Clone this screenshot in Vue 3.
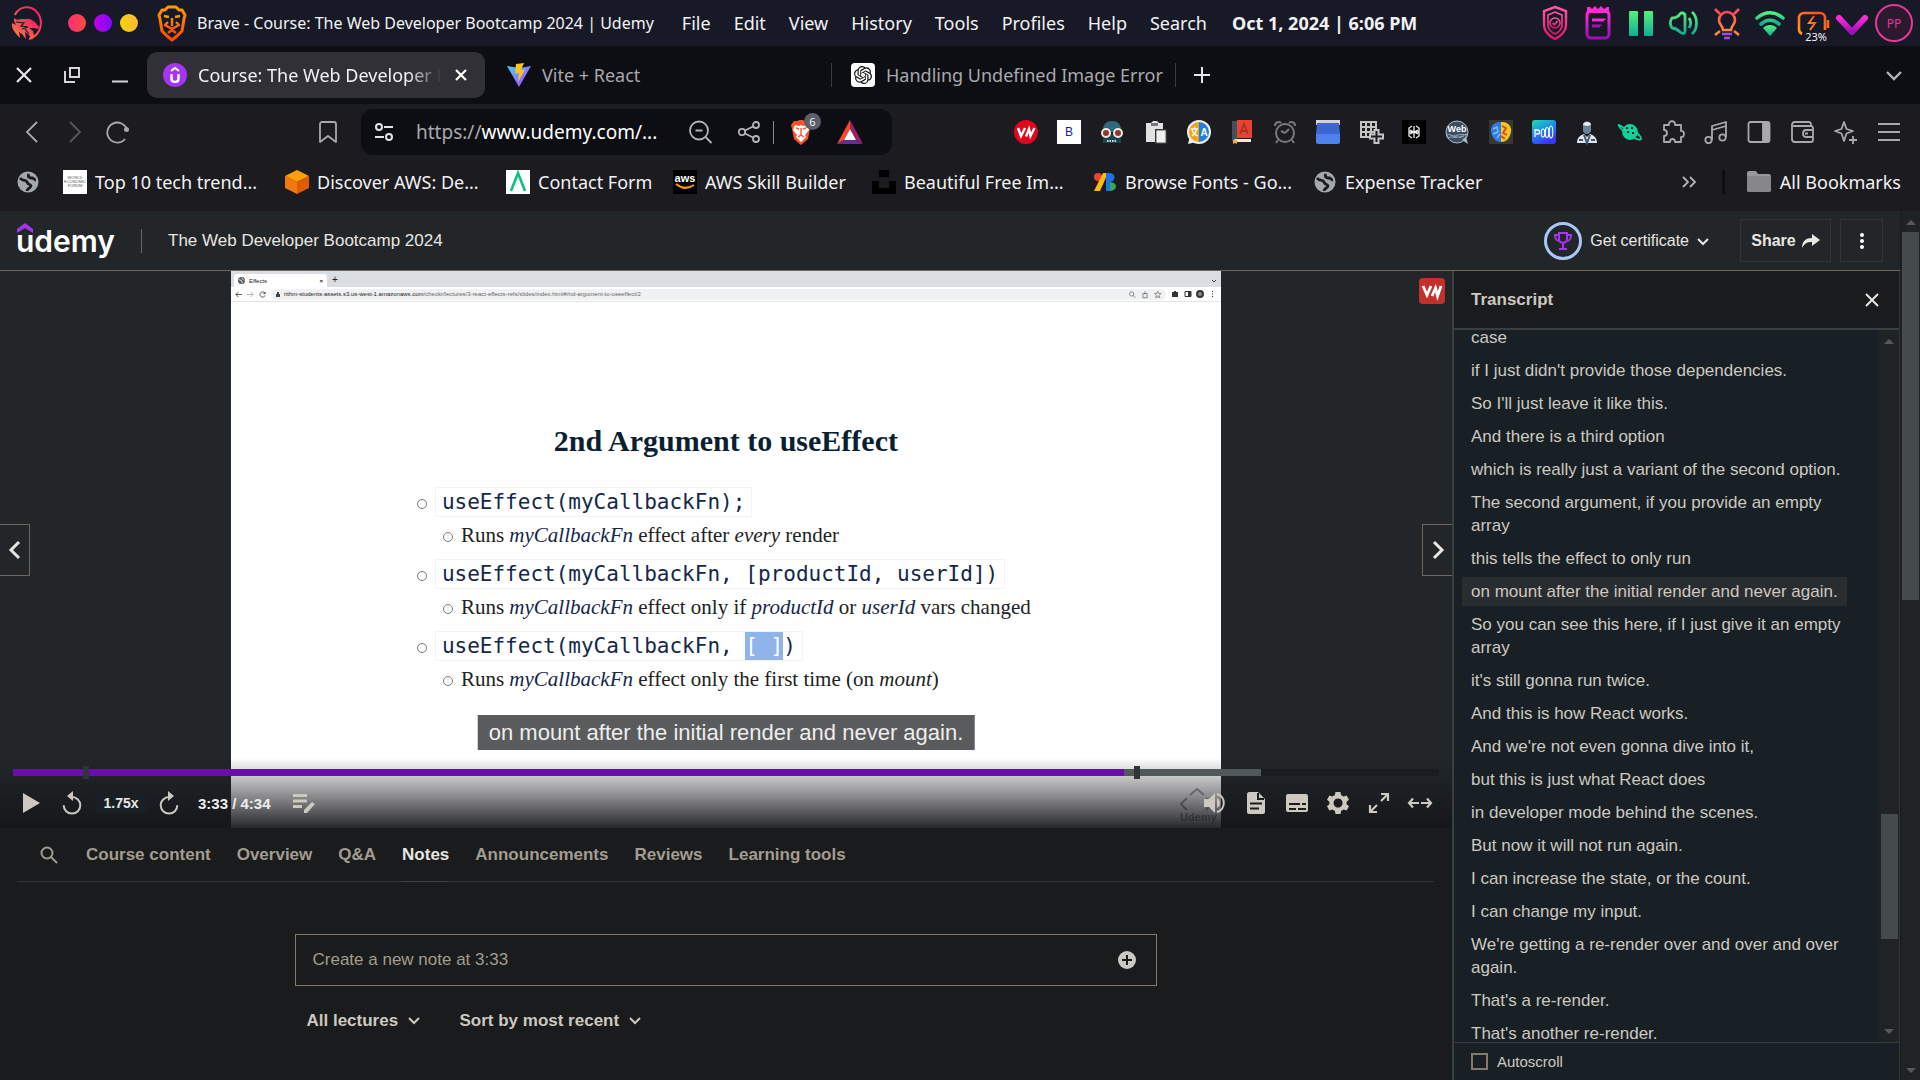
<script setup>
const menus = ['File', 'Edit', 'View', 'History', 'Tools', 'Profiles', 'Help', 'Search']

const lectureTabs = ['Course content', 'Overview', 'Q&A', 'Notes', 'Announcements', 'Reviews', 'Learning tools']
const activeTab = 'Notes'

const cues = [
  'case',
  "if I just didn't provide those dependencies.",
  "So I'll just leave it like this.",
  'And there is a third option',
  'which is really just a variant of the second option.',
  'The second argument, if you provide an empty array',
  'this tells the effect to only run',
  'on mount after the initial render and never again.',
  'So you can see this here, if I just give it an empty array',
  "it's still gonna run twice.",
  'And this is how React works.',
  "And we're not even gonna dive into it,",
  'but this is just what React does',
  'in developer mode behind the scenes.',
  'But now it will not run again.',
  'I can increase the state, or the count.',
  'I can change my input.',
  "We're getting a re-render over and over and over again.",
  "That's a re-render.",
  "That's another re-render."
]
const currentCue = 7

const played = 77.9
const buffered = 87.5
const markers = [5.1, 78.8]
</script>

<template>
  <div class="desktop">
    <!-- Desktop menu bar -->
    <header class="menubar">
      <svg class="dragon" viewBox="0 0 32 38" width="32" height="38">
        <defs>
          <linearGradient id="gDragon" x1="0" y1="1" x2="1" y2="0"><stop offset="0" stop-color="#ff8a3c" /><stop offset="1" stop-color="#ff0f6b" /></linearGradient>
          <linearGradient id="gPink" x1="0" y1="0" x2="0" y2="1"><stop offset="0" stop-color="#ff5aa8" /><stop offset="1" stop-color="#e01668" /></linearGradient>
          <linearGradient id="gMag" x1="0" y1="0" x2="0" y2="1"><stop offset="0" stop-color="#ff2bd6" /><stop offset="1" stop-color="#9c0fb4" /></linearGradient>
          <linearGradient id="gGreen" x1="0" y1="0" x2="0" y2="1"><stop offset="0" stop-color="#55f07c" /><stop offset="1" stop-color="#0fae96" /></linearGradient>
          <linearGradient id="gOrange" x1="0" y1="0" x2="0" y2="1"><stop offset="0" stop-color="#ff9a00" /><stop offset="1" stop-color="#ff4a00" /></linearGradient>
          <linearGradient id="gBulb" x1="0" y1="0" x2="0" y2="1"><stop offset="0" stop-color="#ff4a5e" /><stop offset="1" stop-color="#ff8a3c" /></linearGradient>
          <linearGradient id="gBat" x1="1" y1="0" x2="0" y2="1"><stop offset="0" stop-color="#ff4a1e" /><stop offset="1" stop-color="#ff9a1e" /></linearGradient>
        </defs>
        <path d="M4 11C8 2 19 1 25 7c7 7 6 18 0 24-2 2-4 3-7 4" fill="none" stroke="url(#gDragon)" stroke-width="2" />
        <path d="M3 14c3 3 5 1 9 1l7 0 5 3 4 5-1 2-4-1-5 0 4 3 1 4-2 5-3-5-4-3 1 7-4-5-3-2 1 6C4 29 0 24 1 19l4 2-2-4z" fill="url(#gDragon)" />
        <path d="M5 18l8 1-3 3 7 1-6 2M14 25l4 5" stroke="#171926" stroke-width="1.200" fill="none" />
      </svg>
      <div class="lights"><i class="red"></i><i class="violet"></i><i class="yellow"></i></div>
      <svg class="lion" viewBox="0 0 30 36" width="30" height="36" fill="none" stroke="url(#gOrange)" stroke-width="3" stroke-linejoin="round">
        <path d="M8 5l3-3h8l3 3 3 0 3 5-1 4-2 12-5 5-5 4-5-4-5-5L3 14 2 10l3-5z" />
        <path d="M7 11l5 1M23 11l-5 1M15 13v8M11 17l-3 3 7 4 7-4-3-3M11 28l4-3 4 3" stroke-width="2.400" />
      </svg>
      <span class="window-title">Brave - Course: The Web Developer Bootcamp 2024 | Udemy</span>
      <nav class="menus"><button v-for="m in menus" :key="m">{{ m }}</button></nav>
      <time class="clock">Oct 1, 2024 | 6:06 PM</time>
      <div class="tray">
        <svg viewBox="0 0 32 38" width="32" height="38" fill="none" stroke="url(#gPink)" stroke-width="2.400"><path d="M16 3l11 4v14c0 7-5 11-11 14C10 32 5 28 5 21V7z" /><path d="M16 8l7 3v10c0 4-3 7-7 9-4-2-7-5-7-9V11z" stroke-width="1.600" /><circle cx="16" cy="19" r="5" stroke-width="1.600" /><path d="M13.500 19l2 2 3-4" stroke-width="1.800" /></svg>
        <svg viewBox="0 0 32 38" width="32" height="38" fill="none" stroke="url(#gMag)" stroke-width="3"><rect x="5" y="7" width="22" height="27" rx="4" /><path d="M5 9V3h3l2 2 3-3 3 3 3-3 3 3 3-2h2v6z" fill="#ff2bd6" stroke="none" /><path d="M10 16h12v.1M10 22h8v.1" /></svg>
        <svg viewBox="0 0 32 38" width="32" height="38" fill="url(#gGreen)"><rect x="4" y="7" width="9" height="25" rx="1" /><rect x="19" y="7" width="9" height="25" rx="1" /></svg>
        <svg viewBox="0 0 32 38" width="32" height="38" fill="none" stroke="url(#gGreen)" stroke-width="2.800" stroke-linejoin="round"><path d="M4 14c4 0 6-1 8-4 2-2 5-1 5 2v15c0 3-3 3-5 1-2-2-4-4-8-4-2-3-2-7 0-10z" /><path d="M21 14c2 3 2 7 0 10" /><path d="M24 8c6 5 6 17 0 22" /></svg>
        <svg viewBox="0 0 32 38" width="32" height="38" fill="none" stroke="url(#gBulb)" stroke-width="2.600"><path d="M12 26c0-4-4-5-4-10a8 8 0 0 1 16 0c0 5-4 6-4 10z" /><path d="M4 5l5 5M28 5l-5 5M4 31l5-4M28 31l-5-4" /><path d="M11 30h10M13 34h6" stroke="#a24be0" /></svg>
        <svg viewBox="0 0 32 38" width="32" height="38" fill="none" stroke="url(#gGreen)" stroke-width="3.600" stroke-linecap="round"><path d="M3 14c8-7 18-7 26 0M7 20c6-5 12-5 18 0" /><path d="M9 24c4-4 10-4 14 0l-7 8z" fill="url(#gGreen)" stroke="none" /></svg>
        <div class="battery">
          <svg viewBox="0 0 32 38" width="32" height="38" fill="none" stroke="url(#gBat)" stroke-width="2.600"><path d="M5 30c-2-1-3-2-3-5V14c0-3 2-5 5-5h16c3 0 5 2 5 5v12M31 16v8" /><path d="M17 12l-5 7h6l-5 7" stroke-width="2" /></svg>
          <span>23%</span>
        </div>
        <svg class="vee" viewBox="0 0 32 38" width="32" height="38" fill="none" stroke="url(#gMag)" stroke-width="6" stroke-linecap="round" stroke-linejoin="round"><path d="M3 14l13 14 13-14" /></svg>
        <span class="avatar">PP</span>
      </div>
    </header>

    <!-- Browser tab strip -->
    <div class="tabstrip">
      <div class="wincontrols">
        <button aria-label="Close window"><svg viewBox="0 0 24 24" width="24" height="24" stroke="#e6e6ea" stroke-width="2.200"><path d="M5 5l14 14M19 5L5 19" /></svg></button>
        <button aria-label="Restore window"><svg viewBox="0 0 24 24" width="24" height="24" stroke="#d6d6da" stroke-width="2" fill="none"><rect x="10" y="5" width="9" height="9" /><path d="M5 8v11h10" /></svg></button>
        <button aria-label="Minimize window"><svg viewBox="0 0 24 24" width="24" height="24" stroke="#d6d6da" stroke-width="2"><path d="M4 18.500h16" /></svg></button>
      </div>
      <div class="tab active">
        <svg viewBox="0 0 24 24" width="24" height="24"><circle cx="12" cy="12" r="12" fill="#a435f0" /><path d="M8 8l4-3 4 3" stroke="#fff" stroke-width="2" fill="none" /><path d="M8.500 11v4.500c0 4.500 7 4.500 7 0V11" stroke="#fff" stroke-width="2.400" fill="none" /></svg>
        <span class="tab-title fade">Course: The Web Developer Bootcamp</span>
        <button aria-label="Close tab"><svg viewBox="0 0 16 16" width="16" height="16" stroke="#fff" stroke-width="2.200"><path d="M3 3l10 10M13 3L3 13" /></svg></button>
      </div>
      <div class="tab second">
        <svg viewBox="0 0 24 24" width="24" height="24">
          <defs><linearGradient id="gVite" x1="0" y1="0" x2="1" y2="1"><stop offset="0" stop-color="#41d1ff" /><stop offset="1" stop-color="#bd34fe" /></linearGradient></defs>
          <path d="M0 3l12 21L24 3l-11 2z" fill="url(#gVite)" /><path d="M9 1l8-1-3 7 4-.5L11 19l1-9-4 .5z" fill="#ffc61a" />
        </svg>
        <span class="tab-title">Vite + React</span>
      </div>
      <i class="tab-sep"></i>
      <div class="tab third">
        <svg viewBox="-4 -4 32 32" width="24" height="24"><rect x="-4" y="-4" width="32" height="32" rx="5" fill="#fff" /><path fill="#111" d="M22.2819 9.8211a5.9847 5.9847 0 0 0-.5157-4.9108 6.0462 6.0462 0 0 0-6.5098-2.9A6.0651 6.0651 0 0 0 4.9807 4.1818a5.9847 5.9847 0 0 0-3.9977 2.9 6.0462 6.0462 0 0 0 .7427 7.0966 5.98 5.98 0 0 0 .511 4.9107 6.051 6.051 0 0 0 6.5146 2.9001A5.9847 5.9847 0 0 0 13.2599 24a6.0557 6.0557 0 0 0 5.7718-4.2058 5.9894 5.9894 0 0 0 3.9977-2.9001 6.0557 6.0557 0 0 0-.7475-7.0729zm-9.022 12.6081a4.4755 4.4755 0 0 1-2.8764-1.0408l.1419-.0804 4.7783-2.7582a.7948.7948 0 0 0 .3927-.6813v-6.7369l2.02 1.1686a.071.071 0 0 1 .038.052v5.5826a4.504 4.504 0 0 1-4.4945 4.4944zm-9.6607-4.1254a4.4708 4.4708 0 0 1-.5346-3.0137l.142.0852 4.783 2.7582a.7712.7712 0 0 0 .7806 0l5.8428-3.3685v2.3324a.0804.0804 0 0 1-.0332.0615L9.74 19.9502a4.4992 4.4992 0 0 1-6.1408-1.6464zM2.3408 7.8956a4.485 4.485 0 0 1 2.3655-1.9728V11.6a.7664.7664 0 0 0 .3879.6765l5.8144 3.3543-2.0201 1.1685a.0757.0757 0 0 1-.071 0l-4.8303-2.7865A4.504 4.504 0 0 1 2.3408 7.872zm16.5963 3.8558L13.1038 8.364 15.1192 7.2a.0757.0757 0 0 1 .071 0l4.8303 2.7913a4.4944 4.4944 0 0 1-.6765 8.1042v-5.6772a.79.79 0 0 0-.407-.667zm2.0107-3.0231l-.142-.0852-4.7735-2.7818a.7759.7759 0 0 0-.7854 0L9.409 9.2297V6.8974a.0662.0662 0 0 1 .0284-.0615l4.8303-2.7866a4.4992 4.4992 0 0 1 6.6802 4.66zM8.3065 12.863l-2.02-1.1638a.0804.0804 0 0 1-.038-.0567V6.0742a4.4992 4.4992 0 0 1 7.3757-3.4537l-.142.0805L8.704 5.459a.7948.7948 0 0 0-.3927.6813zm1.0976-2.3654l2.602-1.4998 2.6069 1.4998v2.9994l-2.5974 1.4997-2.6067-1.4997Z" /></svg>
        <span class="tab-title">Handling Undefined Image Error</span>
      </div>
      <i class="tab-sep"></i>
      <button class="newtab" aria-label="New tab"><svg viewBox="0 0 18 18" width="18" height="18" stroke="#e6e6ea" stroke-width="2"><path d="M9 1v16M1 9h16" /></svg></button>
      <button class="tabsearch" aria-label="Search tabs"><svg viewBox="0 0 18 18" width="18" height="18" stroke="#b4b4b8" stroke-width="2.400" fill="none"><path d="M2 6l7 7 7-7" /></svg></button>
    </div>

    <!-- Address row -->
    <div class="toolbar">
      <div class="navbtns">
        <button aria-label="Back"><svg viewBox="0 0 24 24" width="24" height="24" stroke="#a9a9ad" stroke-width="1.800" fill="none"><path d="M17 2L7 12l10 10" /></svg></button>
        <button aria-label="Forward"><svg viewBox="0 0 24 24" width="24" height="24" stroke="#57575c" stroke-width="1.800" fill="none"><path d="M7 2l10 10L7 22" /></svg></button>
        <button aria-label="Reload"><svg viewBox="0 0 24 24" width="24" height="24" stroke="#a9a9ad" stroke-width="1.800" fill="none"><path d="M21 10A10 10 0 1 0 19 19" /><circle cx="20.500" cy="9.500" r="2.500" fill="#a9a9ad" stroke="none" /></svg></button>
      </div>
      <button class="bookmark" aria-label="Bookmark"><svg viewBox="0 0 24 24" width="24" height="24" stroke="#a9a9ad" stroke-width="1.800" fill="none" stroke-linejoin="round"><path d="M4 4c0-1 1-2 2-2h12c1 0 2 1 2 2v18l-8-6-8 6z" /></svg></button>
      <div class="omnibox">
        <svg viewBox="0 0 24 24" width="24" height="24" stroke="#e3e3e6" stroke-width="2" fill="none"><circle cx="7" cy="7" r="3" /><path d="M12 7h9M3 17h9" /><circle cx="17" cy="17" r="3" /></svg>
        <span class="url"><span>https://</span>www.udemy.com/...</span>
        <svg viewBox="0 0 24 24" width="24" height="24" stroke="#b4b4b8" stroke-width="1.800" fill="none"><circle cx="11" cy="10.500" r="9" /><path d="M17.500 17l6 6M7.500 10.500h7" /></svg>
        <svg class="share" viewBox="0 0 24 24" width="24" height="24" stroke="#b4b4b8" stroke-width="1.800" fill="none"><circle cx="5" cy="12" r="3.200" /><circle cx="19" cy="5" r="3" /><circle cx="19" cy="19" r="3" /><path d="M8 10.500l8-4M8 13.500l8 4" /></svg>
        <i class="urlsep"></i>
        <div class="shields">
          <svg viewBox="0 0 22 26" width="22" height="26"><path d="M4 2h4l1-1h4l1 1h4l3 4-1 4-2 10-7 6-7-6L2 10 1 6z" fill="#fb542b" /><path d="M5 6l4 1 2-1 2 1 4-1 2 5-4 5 1 2-5 5-5-5 1-2-4-5z" fill="#fff" /><path d="M6 9l3 1M16 9l-3 1M11 9v7M8 18l3-2 3 2" stroke="#fb542b" stroke-width="1.400" fill="none" /></svg>
          <span>6</span>
        </div>
        <svg class="bat" viewBox="0 0 26 24" width="26" height="24"><path d="M13 0L0 24l7-4 6-11z" fill="#ff4724" /><path d="M13 0v9l6 11 7 4z" fill="#9e1f63" /><path d="M0 24h26l-7-4H7z" fill="#662d91" /><path d="M13 9l6 11H7z" fill="#fff" /></svg>
      </div>
      <div class="extensions">
        <svg viewBox="0 0 24 24"><circle cx="12" cy="12" r="12" fill="#e1051e" /><path d="M4 8l3 8 4-8M12 16.500l3-7.500 1.500 7 4-8" stroke="#fff" stroke-width="2.400" fill="none" /></svg>
        <svg viewBox="0 0 24 24"><rect width="24" height="24" fill="#fff" /><text x="12" y="16" text-anchor="middle" font-family="Liberation Sans, sans-serif" font-size="12" fill="#2018b0">B</text></svg>
        <svg viewBox="0 0 24 24"><path d="M3 12C2 4 7 1 12 1s10 3 9 11z" fill="#2b6b7c" /><path d="M3 14h18v9H3z" fill="#1c4552" /><path d="M7 21h10" stroke="#cde" stroke-width="2" stroke-dasharray="1.500 1" /><circle cx="6" cy="13" r="4" fill="#8c3a30" stroke="#f2e6dc" stroke-width="2" /><circle cx="18" cy="13" r="4" fill="#8c3a30" stroke="#f2e6dc" stroke-width="2" /></svg>
        <svg viewBox="0 0 24 24"><path d="M3 3h5l2-2h4l2 2h4v6h-8v13H3z" fill="#e1e1e1" /><path d="M8 3h7v3H8z" fill="#777" /><rect x="13" y="10" width="10" height="13" fill="#f0f0f0" stroke="#555" /></svg>
        <svg viewBox="0 0 24 24"><circle cx="12" cy="12" r="12" fill="#eee" /><path d="M1 24l2-8 6 6z" fill="#eee" /><path d="M12 2v20A10 10 0 0 1 12 2z" fill="#f2a21c" /><path d="M12 2a10 10 0 0 1 0 20z" fill="#1c80dc" /><text x="17" y="16" text-anchor="middle" font-family="Liberation Sans, sans-serif" font-weight="bold" font-size="10" fill="#fff">A</text><path d="M4 9h7M7.500 7v2M5 16c3-2 4-4 5-7M5 10c1 3 3 5 6 6" stroke="#fff" stroke-width="1.300" fill="none" /></svg>
        <svg viewBox="0 0 24 24"><rect x="2" y="1" width="5" height="20" fill="#45515a" /><rect x="7" width="15" height="18" fill="#e74335" /><path d="M4 19h17v3H7z" fill="#f3e9dc" /><path d="M3 20h4v4l-2-1-2 1z" fill="#f0b429" /><path d="M10 14l4-10 4 10M12 11h5" stroke="#b02d22" stroke-width="1.800" fill="none" /></svg>
        <svg viewBox="0 0 24 24" fill="none" stroke="#77797c" stroke-width="2"><circle cx="12" cy="13" r="9" /><path d="M2 6c0-4 4-5 6-3M22 6c0-4-4-5-6-3M5 20l-2 3M19 20l2 3M12 13l4-4M12 13l-4-2" /></svg>
        <svg viewBox="0 0 24 24"><path d="M0 0h24v5H0z" fill="#d4d4d4" /><path d="M1 3h22l1 11H0z" fill="#3d66d0" /><path d="M0 14h24v8c0 1-1 2-2 2H2c-1 0-2-1-2-2z" fill="#4b83ee" /></svg>
        <svg viewBox="0 0 24 24" fill="none" stroke="#c4c4c4" stroke-width="2"><path d="M2 2h15v15H2zM7 2v15M12 2v15M2 7h15M2 12h15" /><path d="M15 10h7v4h-7zM10 14h14v6H10zM14 20h6v4h-6z" fill="#1c1b20" stroke="none" /><path d="M15.500 10h4v4.500H24v4h-4.500V23h-4v-4.500H11v-4h4.500z" /></svg>
        <svg viewBox="0 0 24 24"><rect width="24" height="24" fill="#000" /><path d="M12 6v12M10 6L7 8v8l3 2M14 6l3 2v8l-3 2M7 12h10M8 10l4 2 4-2M8 14l4-2 4 2" stroke="#eee" stroke-width="1.300" fill="none" /></svg>
        <svg viewBox="0 0 24 24"><circle cx="12" cy="12" r="11" fill="#3e4d5f" stroke="#a9bccd" /><path d="M17 20l6 4-2-7z" fill="#a9bccd" /><text x="12" y="12" text-anchor="middle" font-family="Liberation Sans, sans-serif" font-weight="bold" font-size="9" fill="#fff">Web</text><text x="12" y="18" text-anchor="middle" font-family="Liberation Sans, sans-serif" font-size="5" fill="#cde">ChatGPT</text></svg>
        <svg viewBox="0 0 24 24"><rect width="24" height="24" fill="#3a3733" /><path d="M12 2C5 1 1 7 2 12s4 10 10 10z" fill="#2c7be8" /><path d="M12 2c7-1 11 5 10 10s-4 10-10 10z" fill="#f5c81e" /><path d="M13 6l4 2-3 5 4 2M12 16l4 3" stroke="#e0402c" stroke-width="1.800" fill="none" /><path d="M4 9l4-2 1 5-5 2M8 18l3-4" stroke="#7cc2ff" stroke-width="1.400" fill="none" /></svg>
        <svg viewBox="0 0 24 24"><defs><linearGradient id="gWave" x1="0" y1="0" x2=".5" y2="1"><stop offset="0" stop-color="#1ddfa8" /><stop offset=".5" stop-color="#1e8fe8" /><stop offset="1" stop-color="#3a35ff" /></linearGradient></defs><rect width="24" height="24" rx="3" fill="url(#gWave)" /><path d="M3 17V10h3c2 0 2 4 0 4H4" stroke="#fff" stroke-width="1.300" fill="none" /><g fill="none" stroke="#fff" stroke-width="1.100"><ellipse cx="11" cy="13" rx="1.800" ry="4" /><ellipse cx="15" cy="12.500" rx="1.800" ry="5" /><ellipse cx="19" cy="12" rx="1.800" ry="6" /></g></svg>
        <svg viewBox="0 0 24 24"><path d="M8 5c0-5 8-5 8 0v6c-1 4-7 4-8 0z" fill="#6c8298" /><path d="M8 5c0-4 8-4 8 0l-4 1z" fill="#e8edf0" /><path d="M2 23c0-6 4-8 7-9l3 3 3-3c3 1 7 3 7 9z" fill="#dfe6ee" /><path d="M9 15l3 8 3-8M4 20h4M16 20h4" stroke="#3f5872" stroke-width="2" fill="none" /></svg>
        <svg viewBox="0 0 24 24" fill="none" stroke="#0bd39a" stroke-width="1.800"><circle cx="12" cy="12" r="7" fill="#0bd39a" /><path d="M6 8C1 5 0 4 1 6c2 5 20 16 22 13 1-1-2-4-4-6" /><path d="M8 8h2M13 8h2M9 12h2M14 13h2" stroke="#1c1b20" /></svg>
        <svg viewBox="0 0 24 24" class="line"><path d="M3 5h5c-1-5 7-5 6 0h6v6c4-1 4 7 0 6v5h-6c0-4-5-4-5 0H3v-6c4 0 4-6 0-6z" /></svg>
        <svg viewBox="0 0 24 24" class="line"><circle cx="4.500" cy="20" r="3.200" /><circle cx="18.500" cy="17.500" r="3.200" /><path d="M8 20V6l14-4v15M8 10l14-4" /></svg>
        <svg viewBox="0 0 24 24" class="line"><rect x="1.500" y="2" width="21" height="20" rx="2" /><path d="M16 3h6v18h-6z" fill="#a9a9ad" /></svg>
        <svg viewBox="0 0 24 24" class="line"><path d="M20 7V4c0-1-1-2-2-2H4C2 2 1 3 1 5v14c0 2 1 3 3 3h16c1 0 2-1 2-2V8c0-1-1-2-2-2H2M22 10h-7c-4 0-4 7 0 7h7M14 13.500h3" /></svg>
        <svg viewBox="0 0 24 24" class="line"><path d="M10 2l2.500 7 6.500 2-6.500 2.500L10 21l-2.500-7.500L1 11l6.500-2zM19 16v8M15 20h8" /></svg>
        <svg viewBox="0 0 24 24" class="line"><path d="M1 4h22M1 12h22M1 20h22" /></svg>
      </div>
    </div>

    <!-- Bookmarks -->
    <nav class="bookmarks">
      <a href="#" class="globe-only" aria-label="Bookmark"><svg viewBox="0 0 24 24" width="24" height="24"><circle cx="12" cy="12" r="10.500" fill="#a3a8ad" /><path d="M4 8c3 4 6 1 7 4s4 2 4 4-4 2-4 5M13 4c-2 3 1 4 3 4s2 2 4 2" stroke="#1c1b20" stroke-width="2.800" fill="none" /></svg></a>
      <a href="#" class="bm1"><svg viewBox="0 0 24 24" width="24" height="24"><rect width="24" height="24" fill="#fff" /><g font-family="Liberation Sans, sans-serif" font-size="4" fill="#555" text-anchor="middle"><text x="12" y="9">WORLD</text><text x="12" y="13">ECONOMIC</text><text x="12" y="17">FORUM</text></g></svg>Top 10 tech trend...</a>
      <a href="#" class="bm2"><svg viewBox="0 0 24 24" width="24" height="24"><path d="M12 0l12 6-12 6L0 6z" fill="#ff9d0a" /><path d="M0 6l12 6v12L0 18z" fill="#f2790f" /><path d="M24 6l-12 6v12l12-6z" fill="#e05a00" /></svg>Discover AWS: De...</a>
      <a href="#" class="bm3"><svg viewBox="0 0 24 24" width="24" height="24"><rect width="24" height="24" fill="#fff" /><path d="M5 21l7-18 7 18" stroke="#0cc07b" stroke-width="2.600" fill="none" /></svg>Contact Form</a>
      <a href="#" class="bm4"><svg viewBox="0 0 24 24" width="24" height="24"><rect width="24" height="24" fill="#000" /><text x="12" y="12" text-anchor="middle" font-family="Liberation Sans, sans-serif" font-weight="bold" font-size="11" fill="#fff">aws</text><path d="M3 14c6 5 12 5 18 1" stroke="#f90" stroke-width="2" fill="none" /></svg>AWS Skill Builder</a>
      <a href="#" class="bm5"><svg viewBox="0 0 24 24" width="24" height="24"><path d="M7 0h10v7H7zM0 11h7v7h10v-7h7v13H0z" fill="#000" /></svg>Beautiful Free Im...</a>
      <a href="#" class="bm6"><svg viewBox="0 0 24 24" width="24" height="24"><circle cx="5" cy="7" r="4" fill="#ea4335" /><path d="M10 3h5L7 21H1z" fill="#fbbc04" /><path d="M13 3h4v18h-4z" fill="#1a73e8" /><path d="M17 3c6 0 6 9 0 9z" fill="#1a73e8" /><path d="M17 12c8 0 8 9 0 9z" fill="#34a853" /></svg>Browse Fonts - Go...</a>
      <a href="#" class="bm7"><svg viewBox="0 0 24 24" width="24" height="24"><circle cx="12" cy="12" r="10.500" fill="#a3a8ad" /><path d="M4 8c3 4 6 1 7 4s4 2 4 4-4 2-4 5M13 4c-2 3 1 4 3 4s2 2 4 2" stroke="#1c1b20" stroke-width="2.800" fill="none" /></svg>Expense Tracker</a>
      <button class="more" aria-label="More bookmarks"><svg viewBox="0 0 16 16" width="16" height="16" fill="none" stroke="#b4b4b8" stroke-width="1.800"><path d="M2 3l5 5-5 5M9 3l5 5-5 5" /></svg></button>
      <i class="bmsep"></i>
      <a href="#" class="all"><svg viewBox="0 0 26 24" width="26" height="24"><path d="M1 3c0-1 1-2 2-2h7l2 3h11c1 0 2 1 2 2v14c0 1-1 2-2 2H3c-1 0-2-1-2-2z" fill="#97979c" /><path d="M1 6h24v14c0 1-1 2-2 2H3c-1 0-2-1-2-2z" fill="#87878b" /></svg>All Bookmarks</a>
    </nav>

    <!-- Course page -->
    <div class="viewport">
      <div class="page">
        <header class="course-bar">
          <a href="#" class="logo" aria-label="Udemy"><svg viewBox="0 0 16 10" width="16" height="10"><path d="M0 6l8-6 8 6v4L8 5 0 10z" fill="#a435f0" /></svg><span>udemy</span></a>
          <i class="bar-sep"></i>
          <a href="#" class="course-title">The Web Developer Bootcamp 2024</a>
          <button class="cert">
            <span class="ring"><svg viewBox="0 0 20 20" width="20" height="20" fill="none" stroke="#a435f0" stroke-width="2"><path d="M6 2h8v6c0 5-8 5-8 0zM6 4H2c0 4 1 6 5 6M14 4h4c0 4-1 6-5 6M10 12v5M6 18h8" /></svg></span>
            Get certificate
            <svg viewBox="0 0 12 12" width="12" height="12" fill="none" stroke="#e8e6e1" stroke-width="2"><path d="M1 4l5 5 5-5" /></svg>
          </button>
          <button class="boxed sharebtn">Share <svg viewBox="0 0 18 16" width="18" height="16" fill="#e8e6e1"><path d="M10 1l8 6-8 6V9C5 9 3 10 0 15c0-7 4-10 10-10z" /></svg></button>
          <button class="boxed dots" aria-label="More options"><svg viewBox="0 0 4 16" width="4" height="16" fill="#fff"><circle cx="2" cy="2" r="2" /><circle cx="2" cy="8" r="2" /><circle cx="2" cy="14" r="2" /></svg></button>
        </header>

        <div class="columns">
          <main class="main">
            <section class="stage">
              <div class="frame">
                <div class="mini-tabs">
                  <div class="mini-tab"><svg viewBox="0 0 8 8" width="7" height="7"><circle cx="4" cy="4" r="4" fill="#555" /><path d="M1 3l3 1 1 3M4 1l3 3" stroke="#fff" fill="none" /></svg><span>Effects</span><b>×</b></div>
                  <span class="mini-plus">+</span>
                  <svg class="mini-v" viewBox="0 0 6 6" width="6" height="6" fill="none" stroke="#444"><path d="M1 2l2 2 2-2" /></svg>
                </div>
                <div class="mini-url">
                  <svg viewBox="0 0 8 8" width="7" height="7" fill="none" stroke="#444"><path d="M8 4H1M4 1L1 4l3 3" /></svg>
                  <svg viewBox="0 0 8 8" width="7" height="7" fill="none" stroke="#aaa"><path d="M0 4h7M4 1l3 3-3 3" /></svg>
                  <svg viewBox="0 0 8 8" width="7" height="7" fill="none" stroke="#444"><path d="M7 3A3 3 0 1 0 7 5M7 1v2H5" /></svg>
                  <div class="mini-field">
                    <svg viewBox="0 0 4 6" width="4" height="6" fill="#444"><path d="M0 3h4v3H0zM1 1h2v2H1z" /></svg>
                    <span><b>rithm-students-assets.s3.us-west-1.amazonaws.com</b>/checkr/lectures/3-react-effects-refs/slides/index.html#/nd-argument-to-useeffect/2</span>
                    <svg class="mini-r" viewBox="0 0 30 6" width="32" height="7" fill="none" stroke="#777" stroke-width=".8"><circle cx="2.500" cy="2.500" r="2" /><path d="M4 4l2 2M13 2h4v4h-4zM15 0v3M27 0l1 2h2l-2 2 1 2-2-1-2 1 1-2-2-2h2z" /></svg>
                  </div>
                  <svg class="mini-ext" viewBox="0 0 46 8" width="46" height="8"><path d="M1 2h2V1h2v1h2v5H1z" fill="#333" /><path d="M14 1.500h6v5h-6z" fill="none" stroke="#333" /><path d="M17 1h3v6h-3z" fill="#333" /><circle cx="29" cy="4" r="4" fill="#333" /><circle cx="29" cy="4" r="2" fill="#888" /><path d="M41 1h1v1h-1zM41 3.500h1v1h-1zM41 6h1v1h-1z" fill="#333" /></svg>
                </div>
                <article class="slide">
                  <h1>2nd Argument to useEffect</h1>
                  <ul>
                    <li><code>useEffect(myCallbackFn);</code>
                      <ul><li>Runs <em class="v">myCallbackFn</em> effect after <em>every</em> render</li></ul>
                    </li>
                    <li><code>useEffect(myCallbackFn, [productId, userId])</code>
                      <ul><li>Runs <em class="v">myCallbackFn</em> effect only if <em class="v">productId</em> or <em class="v">userId</em> vars changed</li></ul>
                    </li>
                    <li><code>useEffect(myCallbackFn, <mark>[ ]</mark>)</code>
                      <ul><li>Runs <em class="v">myCallbackFn</em> effect only the first time (on <em>mount</em>)</li></ul>
                    </li>
                  </ul>
                </article>
                <div class="watermark"><svg viewBox="0 0 32 22" width="32" height="22" fill="none" stroke="#66696b" stroke-width="2"><path d="M10 7l7-6 7 6M7 10l-6 6 6 6M26 10l6 6-6 6" /></svg><span>Udemy</span></div>
              </div>
              <p class="caption">on mount after the initial render and never again.</p>
              <span class="vn"><svg viewBox="0 0 20 12" width="20" height="12" fill="none" stroke="#fff" stroke-width="2.800"><path d="M1 1l4 9 4-9M10 11l3.500-8 2 8L19 1" /></svg></span>
              <button class="step prev" aria-label="Previous"><svg viewBox="0 0 12 20" width="12" height="20" fill="none" stroke="#e8e6e1" stroke-width="3"><path d="M10 2L2 10l8 8" /></svg></button>
              <button class="step next" aria-label="Next"><svg viewBox="0 0 12 20" width="12" height="20" fill="none" stroke="#e8e6e1" stroke-width="3"><path d="M2 2l8 8-8 8" /></svg></button>

              <div class="player">
                <div class="progress">
                  <div class="buffered" :style="{ width: buffered + '%' }"></div>
                  <div class="played" :style="{ width: played + '%' }"></div>
                  <i v-for="m in markers" :key="m" class="marker" :style="{ left: m + '%' }"></i>
                </div>
                <div class="controls">
                  <button aria-label="Play"><svg viewBox="0 0 24 24"><path d="M4 2l17 10L4 22z" /></svg></button>
                  <button aria-label="Rewind"><svg viewBox="0 0 24 24"><path d="M12 6a8.300 8.300 0 1 1-8.300 8.300" fill="none" stroke="#cdc8c0" stroke-width="2" /><path d="M13 0v10L7 5z" /></svg></button>
                  <button class="speed">1.75x</button>
                  <button aria-label="Forward"><svg viewBox="0 0 24 24"><path d="M12 6a8.300 8.300 0 1 0 8.300 8.300" fill="none" stroke="#cdc8c0" stroke-width="2" /><path d="M11 0v10l6-5z" /></svg></button>
                  <span class="time">3:33 / 4:34</span>
                  <button aria-label="Add note"><svg viewBox="0 0 24 24"><path d="M1 3h14v3H1zM1 8.500h14v3H1zM1 14h9v3H1zM12 19l8-8 3 2-8 9h-3z" /></svg></button>
                  <i class="grow"></i>
                  <button aria-label="Volume"><svg viewBox="0 0 24 24"><path d="M1 8h5l6-6v20l-6-6H1zM14 7c4 2 4 8 0 10z" /><path d="M14 3c9 2 9 16 0 18" fill="none" stroke="#cdc8c0" stroke-width="2" /></svg></button>
                  <button aria-label="Transcript"><svg viewBox="0 0 24 24"><path d="M3 3c0-1 1-2 2-2h9l7 7v13c0 1-1 2-2 2H5c-1 0-2-1-2-2z" /><path d="M14 2v6h6M6 12.500h12M6 17.500h9" stroke="#1a1c1e" stroke-width="2" fill="none" /></svg></button>
                  <button aria-label="Captions"><svg viewBox="0 0 24 24"><rect x="1" y="3" width="22" height="18" rx="2" /><path d="M4 13h11M17 13h4M4 18h7M13 18h8" stroke="#1a1c1e" stroke-width="2" /></svg></button>
                  <button aria-label="Settings"><svg viewBox="0 0 24 24"><path fill-rule="evenodd" d="M9.500 1h5l.6 3 2.500 1.500 3-1 2.400 4.200-2.400 2v2.600l2.400 2-2.400 4.200-3-1-2.500 1.500-.6 3h-5l-.6-3-2.500-1.500-3 1L1 15.300l2.400-2v-2.600L1 8.700l2.400-4.200 3 1L8.900 4zM12 7.500a4.500 4.500 0 1 0 .1 0z" /></svg></button>
                  <button aria-label="Full screen"><svg viewBox="0 0 24 24" stroke="#cdc8c0" stroke-width="2.200"><path d="M14 3h7v7M21 3l-7 7M10 21H3v-7M3 21l7-7" fill="none" /></svg></button>
                  <button aria-label="Expand"><svg viewBox="0 0 24 24" stroke="#cdc8c0" stroke-width="2.200"><path d="M1 12h10M5 7.500L1 12l4 4.500M13 12h10M19 7.500l4 4.500-4 4.500" fill="none" /></svg></button>
                </div>
              </div>
            </section>

            <section class="below">
              <nav class="lecture-tabs">
                <button class="find" aria-label="Search"><svg viewBox="0 0 18 18" width="18" height="18" fill="none" stroke="#a39c90" stroke-width="2"><circle cx="7" cy="7" r="5.500" /><path d="M11 11l6 6" /></svg></button>
                <button v-for="t in lectureTabs" :key="t" :class="{ on: t === activeTab }">{{ t }}</button>
              </nav>
              <div class="notes">
                <div class="note-box">
                  <input type="text" placeholder="Create a new note at 3:33" aria-label="Create a new note" />
                  <button aria-label="Add"><svg viewBox="0 0 18 18" width="18" height="18"><circle cx="9" cy="9" r="9" fill="#cdc8c0" /><path d="M9 4v10M4 9h10" stroke="#191b1c" stroke-width="2" /></svg></button>
                </div>
                <div class="filters">
                  <label><select aria-label="Lecture filter"><option>All lectures</option></select><svg viewBox="0 0 12 12" width="12" height="12" fill="none" stroke="#cdc8c0" stroke-width="2"><path d="M1 4l5 5 5-5" /></svg></label>
                  <label><select aria-label="Sort order"><option>Sort by most recent</option></select><svg viewBox="0 0 12 12" width="12" height="12" fill="none" stroke="#cdc8c0" stroke-width="2"><path d="M1 4l5 5 5-5" /></svg></label>
                </div>
              </div>
            </section>
          </main>

          <aside class="transcript">
            <div class="transcript-head">
              <h2>Transcript</h2>
              <button aria-label="Close transcript"><svg viewBox="0 0 14 14" width="14" height="14" stroke="#e8e6e1" stroke-width="2"><path d="M1 1l12 12M13 1L1 13" /></svg></button>
            </div>
            <div class="transcript-body">
              <div class="cues"><p v-for="(c, i) in cues" :key="i" :class="{ current: i === currentCue }">{{ c }}</p></div>
              <div class="track inner"><i class="arrow up"></i><i class="thumb"></i><i class="arrow down"></i></div>
            </div>
            <label class="autoscroll"><input type="checkbox" />Autoscroll</label>
          </aside>
        </div>
      </div>
      <div class="track outer"><i class="arrow up"></i><i class="thumb"></i><i class="arrow down"></i></div>
    </div>
  </div>
</template>

<style>
html, body { margin: 0; background: #191b1c; }
</style>

<style scoped>
* { box-sizing: border-box; }
button { border: 0; padding: 0; margin: 0; background: none; color: inherit; font: inherit; display: flex; align-items: center; white-space: nowrap; }
a { color: inherit; text-decoration: none; }
svg { display: block; flex: none; overflow: visible; }
h1, h2, p, ul { margin: 0; padding: 0; }

.desktop { display: flex; flex-direction: column; height: 100vh; overflow: hidden; font-family: "Noto Sans", sans-serif; font-size: 18px; color: #f2f2f4; white-space: nowrap; }

.menubar { display: flex; align-items: center; flex: none; height: 46px; padding: 0 7px 0 11px; background: #171926; }
.lights { display: flex; gap: 8px; margin: 0 19px 0 25px; }
.lights i { width: 18px; height: 18px; border-radius: 50%; }
.red { background: linear-gradient(90deg, #ff2f7c, #ff4a3c); }
.violet { background: linear-gradient(90deg, #c400e0, #7a0cff); }
.yellow { background: linear-gradient(90deg, #f2d40a, #ffb838); }
.window-title { margin: 0 28px 0 10px; font-size: 16px; }
.menus { display: flex; gap: 23px; }
.clock { margin-left: 25px; font-weight: 700; }
.tray { display: flex; align-items: center; gap: 11px; margin-left: auto; }
.battery { position: relative; }
.battery span { position: absolute; right: 2px; bottom: 0; font-size: 11px; line-height: 11px; background: #171926; }
.vee { margin-left: -4px; }
.avatar { display: flex; align-items: center; justify-content: center; width: 38px; height: 38px; border: 2px solid #e8369a; border-radius: 50%; background: #2b1930; color: #e8369a; font-size: 12px; margin-left: -4px; }

.tabstrip { display: flex; align-items: center; flex: none; height: 58px; padding: 0 17px 0 12px; background: #0d0e13; }
.wincontrols { display: flex; gap: 24px; width: 135px; }
.tab { display: flex; align-items: center; gap: 11px; height: 46px; padding-bottom: 1px; color: #a9a9ad; }
.tab.active { width: 338px; padding: 0 16px 1px; border-radius: 10px; background: #303036; color: #f2f2f4; }
.tab.second { width: 324px; margin-left: 22px; }
.tab-title { flex: 1; min-width: 0; overflow: hidden; line-height: 26px; }
.fade { mask-image: linear-gradient(90deg, #000 86%, transparent); }
.tab-sep { width: 1px; height: 24px; background: #3a3b42; }
.tab.third { width: 324px; margin-left: 19px; }
.newtab { margin-left: 17px; }
.tabsearch { margin-left: auto; }

.toolbar { display: flex; align-items: center; flex: none; height: 56px; padding: 0 19px 0 20px; background: #1c1b20; }
.navbtns { display: flex; gap: 19px; }
.bookmark { margin-left: 186px; }
.omnibox { display: flex; align-items: center; width: 531px; height: 46px; margin-left: 21px; padding-left: 11px; border-radius: 12px; background: #0d0e13; }
.url { width: 253px; margin: 0 19px 0 20px; color: #fff; font-size: 19px; line-height: 26px; }
.url span { color: #a9a9ad; }
.share { margin: 0 0 0 25px; }
.urlsep { width: 1px; height: 23px; margin: 0 16px 0 12px; background: #8a8a8e; }
.shields { position: relative; width: 22px; margin-right: 25px; }
.shields span { position: absolute; left: 14px; top: -6px; width: 17px; height: 17px; border-radius: 50%; background: #5d5e6b; font-size: 11px; line-height: 17px; text-align: center; }
.extensions { display: flex; justify-content: space-between; width: 887px; margin-left: auto; }
.extensions svg { width: 24px; height: 24px; }
.line { fill: none; stroke: #a9a9ad; stroke-width: 1.8px; stroke-linejoin: round; }

.bookmarks { display: flex; align-items: center; flex: none; height: 51px; padding: 0 19px 8px 16px; background: #1c1b20; }
.bookmarks a { display: flex; align-items: center; gap: 8px; }
.bm1 { width: 222px; margin-left: 23px; }
.bm2 { width: 221px; }
.bm3 { width: 167px; }
.bm4 { width: 199px; }
.bm5 { width: 221px; }
.bm6 { width: 220px; }
.more { margin-left: auto; }
.bmsep { width: 3px; height: 24px; margin: 0 21px 0 25px; background: #0d0e13; }

.viewport { display: flex; flex: 1; min-height: 0; font-family: "Liberation Sans", sans-serif; color: #cdc8c0; }
.page { display: flex; flex-direction: column; flex: 1; min-width: 0; }
.course-bar { display: flex; align-items: center; flex: none; height: 60px; padding: 0 17px 0 16px; background: #222629; border-bottom: 1px solid #716659; font-size: 16px; color: #e8e6e1; }
.logo { position: relative; width: 99px; font-family: Inter, sans-serif; font-weight: 600; font-size: 30px; line-height: 36px; color: #fff; }
.logo svg { position: absolute; left: 1px; top: 0; }
.bar-sep { width: 1px; height: 24px; margin: 0 26px; background: #716659; }
.course-title { font-size: 17px; }
.cert { margin-left: auto; gap: 8px; }
.ring { display: flex; align-items: center; justify-content: center; width: 38px; height: 38px; border: 3px solid #a8c7fa; border-radius: 50%; }
.boxed { justify-content: center; gap: 6px; height: 43px; border: 1px solid #303539; font-weight: 700; }
.sharebtn { width: 91px; margin: 0 9px 0 31px; }
.dots { width: 43px; }

.columns { display: flex; flex: 1; min-height: 0; }
.main { display: flex; flex-direction: column; flex: 1; min-width: 0; background: #191b1c; }
.stage { position: relative; display: flex; justify-content: center; flex: 1; min-height: 0; background: #222629; }
.frame { position: relative; height: 100%; aspect-ratio: 16 / 9; background: #fff; color: #222; }
.mini-tabs { display: flex; align-items: flex-end; height: 16px; padding: 0 4px 0 3px; background: #dadee2; font-size: 6px; }
.mini-tab { display: flex; align-items: center; gap: 4px; width: 93px; height: 13px; padding: 0 4px; border-radius: 3px 3px 0 0; background: #fff; }
.mini-tab b { margin-left: auto; }
.mini-plus { margin: 0 0 1px 5px; font-size: 10px; line-height: 12px; }
.mini-v { margin: 0 0 3px auto; }
.mini-url { display: flex; align-items: center; gap: 5px; height: 15px; padding: 0 4px; border-bottom: 1px solid #e2e4e6; font-size: 6px; }
.mini-field { display: flex; align-items: center; flex: 1; gap: 4px; height: 11px; padding: 0 5px; border-radius: 6px; background: #eff1f3; color: #666; }
.mini-field b { font-weight: 400; color: #222; }
.mini-r { margin-left: auto; }

.slide { padding: 121px 0 0 186px; font-family: "Liberation Serif", serif; font-size: 21px; color: #222; }
.slide h1 { width: 618px; text-align: center; font-size: 30px; line-height: 36px; margin-bottom: 25px; color: #0b1f33; }
.slide ul { list-style: none; }
.slide li { position: relative; line-height: 36px; }
.slide > ul > li { padding-left: 18px; height: 72px; }
.slide li li { padding-left: 26px; line-height: 30px; }
.slide li::before { content: ""; position: absolute; left: 0; top: 15px; width: 8px; height: 8px; border: 1px solid #777; border-radius: 50%; }
.slide li li::before { left: 8px; top: 12px; }
.slide code { padding: 2px 6px; border: 1px solid #f2f3f5; font-family: "DejaVu Sans Mono", monospace; font-size: 21px; color: #14264a; }
.slide mark { padding: 2px 0; background: #8eb4ea; color: #fff; }
.slide .v { color: #14264a; }
.watermark { position: absolute; right: 7px; bottom: 4px; width: 34px; font-size: 11px; font-weight: 700; line-height: 14px; color: #4a4c4f; opacity: .6; }

.caption { position: absolute; left: 50%; bottom: 78px; transform: translateX(-50%); padding: 0 11px; background: #5a5b5d; color: #eee; font-size: 22px; line-height: 35px; }
.vn { position: absolute; right: 7px; top: 7px; display: flex; align-items: center; justify-content: center; width: 26px; height: 26px; border-radius: 4px; background: #c2302a; }
.step { position: absolute; top: 253px; width: 30px; height: 52px; justify-content: center; border: 1px solid #716659; background: #222629; }
.prev { left: 0; border-left: 0; }
.next { right: 0; border-right: 0; }

.player { position: absolute; left: 0; right: 0; bottom: 0; height: 70px; padding: 11px 13px 0; background: linear-gradient(rgba(20, 21, 25, 0), rgba(20, 21, 25, .45) 50%, rgba(20, 21, 25, .92)); }
.progress { position: relative; height: 7px; background: #1a1d1f; }
.buffered, .played { position: absolute; left: 0; top: 0; height: 7px; background: #50595a; }
.played { background: #6a0dad; }
.marker { position: absolute; top: -3px; width: 6px; height: 13px; margin-left: -3px; background: #303539; }
.controls { display: flex; align-items: center; height: 54px; padding: 0 7px 0 6px; }
.controls button { width: 24px; height: 24px; margin-right: 17px; justify-content: center; }
.controls button:last-child { margin-right: 0; }
.controls svg { width: 24px; height: 24px; fill: #cdc8c0; }
.controls .speed { width: 52px; height: 20px; margin: 0 10px 0 -6px; background: #182025; font-size: 14px; font-weight: 700; color: #e8e6e1; }
.time { width: 77px; margin-right: 17px; font-size: 15px; font-weight: 700; color: #eee; }
.grow { flex: 1; }

.below { flex: none; height: 252px; padding: 0 18px 0 17px; }
.lecture-tabs { display: flex; gap: 26px; height: 54px; padding-left: 23px; border-bottom: 1px solid #303539; font-size: 17px; font-weight: 700; color: #a39c90; }
.lecture-tabs .find { margin-right: 2px; }
.lecture-tabs .on { color: #e8e6e1; box-shadow: 0 1px #3d4245; }
.notes { width: 862px; margin: 52px auto 0; }
.note-box { display: flex; align-items: center; height: 52px; padding: 0 20px 0 17px; border: 1px solid #85796b; }
.note-box input { flex: 1; min-width: 0; border: 0; outline: 0; padding: 0; background: none; font: inherit; font-size: 17px; color: #cdc8c0; }
.note-box input::placeholder { color: #a39c90; opacity: 1; }
.filters { display: flex; gap: 40px; margin-top: 22px; padding-left: 12px; font-size: 17px; font-weight: 700; }
.filters label { display: flex; align-items: center; gap: 9px; height: 24px; }
.filters select { appearance: none; border: 0; padding: 0; margin: 0; background: none; font: inherit; color: #cdc8c0; }

.transcript { display: flex; flex-direction: column; width: 448px; border-left: 2px solid #3a3f42; border-right: 1px solid #303539; background: #182025; white-space: normal; }
.transcript-head { display: flex; align-items: center; justify-content: space-between; flex: none; height: 59px; padding: 0 20px 0 17px; border-bottom: 2px solid #3a3f42; background: #191b1c; }
.transcript h2 { font-size: 17px; }
.transcript-body { display: flex; flex: 1; min-height: 0; }
.cues { flex: 1; min-width: 0; overflow: hidden; padding: 0 24px 0 8px; font-size: 17px; line-height: 23px; }
.cues p { width: fit-content; padding: 3px 9px; margin-bottom: 4px; }
.cues p:first-child { margin-top: -7px; }
.cues .current { background: #2a2d30; }
.autoscroll { display: flex; align-items: center; flex: none; gap: 9px; height: 38px; padding: 0 17px; border-top: 1px solid #3a3f42; font-size: 15px; }
.autoscroll input { appearance: none; width: 17px; height: 17px; margin: 0; border: 2px solid #85796b; }

.track { display: flex; flex-direction: column; align-items: center; flex: none; width: 20px; background: #1f2324; }
.inner { padding: 9px 0 8px; }
.outer { padding: 9px 0 7px; border-left: 1px solid #191b1c; }
.arrow { width: 0; height: 0; border: 5px solid transparent; }
.up { border-top: 0; border-bottom-color: #54595c; }
.down { border-bottom: 0; border-top-color: #54595c; margin-top: auto; }
.thumb { width: 17px; background: #454a4d; }
.outer .thumb { height: 368px; margin-top: 7px; }
.inner .thumb { height: 125px; margin-top: 470px; }
</style>
